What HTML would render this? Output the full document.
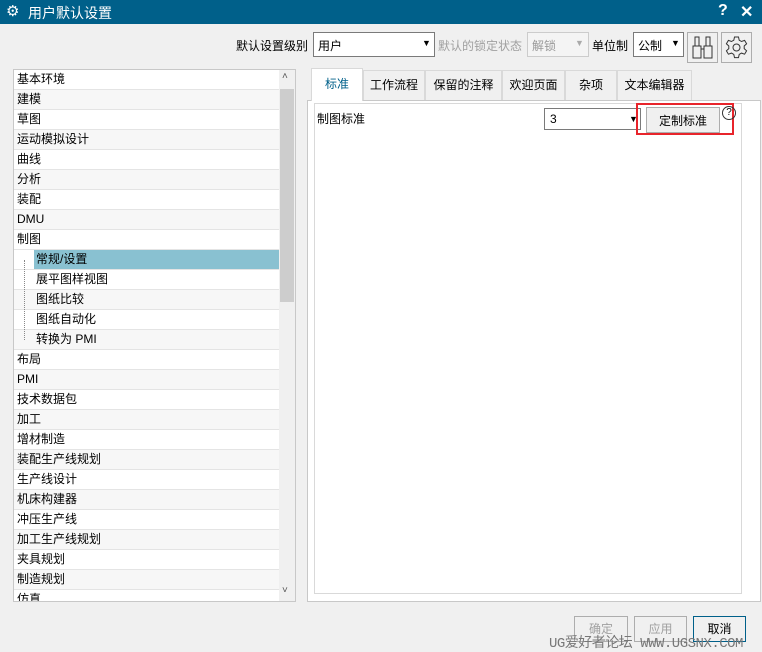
<!DOCTYPE html>
<html><head><meta charset="utf-8"><style>
*{box-sizing:border-box;margin:0;padding:0}
body{width:762px;height:652px;background:#f0f0f0;font-family:"Liberation Sans","Noto Sans CJK SC",sans-serif;font-size:12px;color:#000;position:relative;overflow:hidden}
.a{position:absolute}
.title{left:0;top:0;width:762px;height:24px;background:#00608a;color:#fff;font-size:14px}
.box{background:#fff;border:1px solid #7a7a7a}
.row{position:absolute;left:0;width:265px;height:20px;border-bottom:1px solid #e4e4e4;padding-left:3px;line-height:19px}
.row.c{padding-left:22px}
.tab{position:absolute;top:70px;height:30px;border:1px solid #d9d9d9;border-bottom:none;background:#f0f0f0;text-align:center;line-height:28px}
.btn{position:absolute;top:616px;height:26px;border:1px solid #adadad;background:#f0f0f0;text-align:center;line-height:24px;color:#a0a0a0}
</style></head><body>
<div class="a title">
 <span class="a" style="left:6px;top:2px;font-size:15px">⚙</span>
 <span class="a" style="left:28px;top:3px">用户默认设置</span>
 <span class="a" style="left:718px;top:2px;font-weight:bold;font-size:16px">?</span>
 <span class="a" style="left:740px;top:2px;font-weight:bold;font-size:16px">✕</span>
</div>
<span class="a" style="left:236px;top:37px">默认设置级别</span>
<div class="a box" style="left:313px;top:32px;width:122px;height:25px"><span class="a" style="left:4px;top:4px">用户</span><span class="a" style="left:108px;top:5px;font-size:9px">▼</span></div>
<span class="a" style="left:438px;top:37px;color:#a0a0a0">默认的锁定状态</span>
<div class="a" style="left:527px;top:32px;width:62px;height:25px;border:1px solid #ccc;background:#f4f4f4"><span class="a" style="left:4px;top:4px;color:#999">解锁</span><span class="a" style="left:47px;top:5px;font-size:9px;color:#aaa">▼</span></div>
<span class="a" style="left:592px;top:37px">单位制</span>
<div class="a box" style="left:633px;top:32px;width:51px;height:25px"><span class="a" style="left:4px;top:4px">公制</span><span class="a" style="left:37px;top:5px;font-size:9px">▼</span></div>
<div class="a" style="left:687px;top:32px;width:31px;height:31px;border:1px solid #adadad">
<svg width="29" height="29" viewBox="0 0 29 29"><g fill="none" stroke="#333" stroke-width="1"><rect x="5" y="13" width="8" height="12"/><rect x="16" y="13" width="8" height="12"/><rect x="7" y="4" width="4" height="9"/><rect x="18" y="4" width="4" height="9"/><line x1="13" y1="16" x2="16" y2="16"/></g></svg></div>
<div class="a" style="left:721px;top:32px;width:31px;height:31px;border:1px solid #adadad">
<svg width="29" height="29" viewBox="0 0 29 29"><g fill="none" stroke="#333" stroke-width="1"><path d="M12.5 4h4l.7 3.2 2.3 1.3 3.1-1.1 2 3.4-2.4 2.2v2.6l2.4 2.2-2 3.4-3.1-1.1-2.3 1.3-.7 3.2h-4l-.7-3.2-2.3-1.3-3.1 1.1-2-3.4 2.4-2.2v-2.6L4.4 10.8l2-3.4 3.1 1.1 2.3-1.3z"/><circle cx="14.5" cy="14.5" r="3.5"/></g></svg></div>

<div class="a box" style="left:13px;top:69px;width:283px;height:533px;border-color:#c8c8c8;overflow:hidden">
<div class="a" style="left:0;top:0;width:265px;height:531px;overflow:hidden">
<div class="row" style="top:0">基本环境</div>
<div class="row" style="top:20px;background:#f7f7f7">建模</div>
<div class="row" style="top:40px">草图</div>
<div class="row" style="top:60px;background:#f7f7f7">运动模拟设计</div>
<div class="row" style="top:80px">曲线</div>
<div class="row" style="top:100px;background:#f7f7f7">分析</div>
<div class="row" style="top:120px">装配</div>
<div class="row" style="top:140px;background:#f7f7f7">DMU</div>
<div class="row" style="top:160px">制图</div>
<div class="row c" style="top:180px;background:linear-gradient(90deg,#fff 20px,#89c1d1 20px)">常规/设置</div>
<div class="row c" style="top:200px">展平图样视图</div>
<div class="row c" style="top:220px;background:#f7f7f7">图纸比较</div>
<div class="row c" style="top:240px">图纸自动化</div>
<div class="row c" style="top:260px;background:#f7f7f7">转换为 PMI</div>
<div class="a" style="left:10px;top:190px;width:10px;height:80px;border-left:1px dotted #888"></div>
<div class="row" style="top:280px">布局</div>
<div class="row" style="top:300px;background:#f7f7f7">PMI</div>
<div class="row" style="top:320px">技术数据包</div>
<div class="row" style="top:340px;background:#f7f7f7">加工</div>
<div class="row" style="top:360px">增材制造</div>
<div class="row" style="top:380px;background:#f7f7f7">装配生产线规划</div>
<div class="row" style="top:400px">生产线设计</div>
<div class="row" style="top:420px;background:#f7f7f7">机床构建器</div>
<div class="row" style="top:440px">冲压生产线</div>
<div class="row" style="top:460px;background:#f7f7f7">加工生产线规划</div>
<div class="row" style="top:480px">夹具规划</div>
<div class="row" style="top:500px;background:#f7f7f7">制造规划</div>
<div class="row" style="top:520px">仿真</div>
</div>
<div class="a" style="left:265px;top:0;width:16px;height:531px;background:#f0f0f0"></div>
<div class="a" style="left:266px;top:19px;width:14px;height:213px;background:#cdcdcd"></div>
<span class="a" style="left:268px;top:1px;font-size:10px;color:#555">˄</span>
<span class="a" style="left:268px;top:515px;font-size:10px;color:#555">˅</span>
</div>

<div class="a" style="left:307px;top:100px;width:454px;height:502px;border:1px solid #c8c8c8;background:#fff"></div>
<div class="a" style="left:314px;top:103px;width:428px;height:491px;border:1px solid #d9d9d9;background:#fff"></div>
<div class="tab" style="left:311px;top:68px;width:52px;height:33px;background:#fff;color:#00608a;line-height:30px">标准</div>
<div class="tab" style="left:363px;width:62px">工作流程</div>
<div class="tab" style="left:425px;width:77px">保留的注释</div>
<div class="tab" style="left:502px;width:63px">欢迎页面</div>
<div class="tab" style="left:565px;width:52px">杂项</div>
<div class="tab" style="left:617px;width:75px">文本编辑器</div>
<span class="a" style="left:317px;top:110px">制图标准</span>
<div class="a box" style="left:544px;top:108px;width:97px;height:22px"><span class="a" style="left:5px;top:3px">3</span><span class="a" style="left:84px;top:5px;font-size:9px">▼</span></div>
<div class="a" style="left:646px;top:107px;width:74px;height:26px;border:1px solid #adadad;background:#f0f0f0;text-align:center;line-height:26px">定制标准</div>
<div class="a" style="left:636px;top:103px;width:98px;height:32px;border:2px solid #e8242b"></div>
<div class="a" style="left:722px;top:106px;width:14px;height:14px;border:1px solid #333;border-radius:50%;font-size:10px;text-align:center;line-height:12px">?</div>

<div class="btn" style="left:574px;width:54px">确定</div>
<div class="btn" style="left:634px;width:53px">应用</div>
<div class="btn" style="left:693px;width:53px;border-color:#00608a;color:#000">取消</div>
<span class="a" style="left:549px;top:632px;font-size:14px;color:#777;font-family:'Liberation Mono','Noto Sans CJK SC',monospace;letter-spacing:-0.5px;white-space:nowrap">UG爱好者论坛 WWW.UGSNX.COM</span>
</body></html>
